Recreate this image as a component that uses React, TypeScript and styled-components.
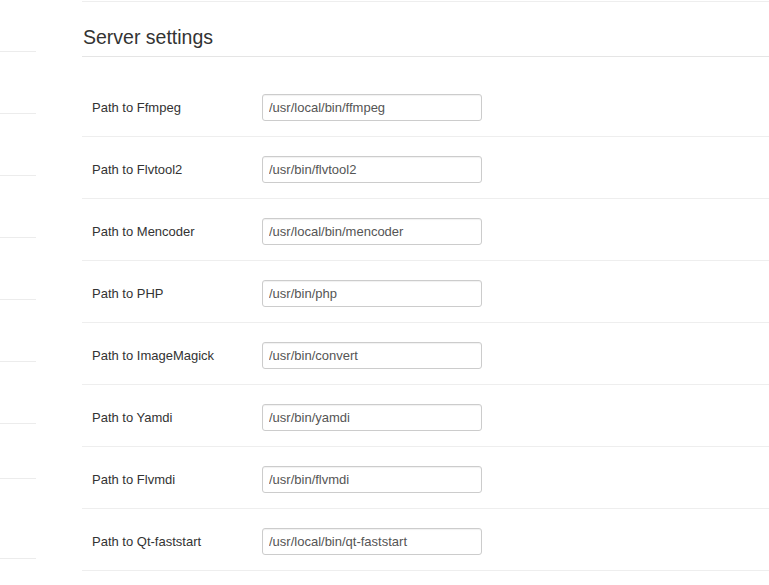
import React from "react";
import styled, { createGlobalStyle } from "styled-components";

const GlobalStyle = createGlobalStyle`
  html, body {
    margin: 0;
    padding: 0;
    background: #ffffff;
    font-family: "Liberation Sans", Arial, Helvetica, sans-serif;
    font-size: 13px;
    color: #333333;
  }
  * { box-sizing: border-box; }
`;

const Page = styled.div`
  display: flex;
  align-items: flex-start;
  gap: 46px;
  width: 769px;
  height: 585px;
  overflow: hidden;
`;

const Sidebar = styled.nav`
  flex: 0 0 36px;
  display: flex;
  flex-direction: column;
`;

const SideItem = styled.div<{ $h: number }>`
  height: ${(p) => p.$h + 1}px;
  border-bottom: 1px solid #ececec;
`;

const Main = styled.main`
  flex: 1;
  min-width: 0;
  margin-top: 1px;
  border-top: 1px solid #eeeeee;
`;

const Legend = styled.h2`
  margin: 14px 0 18px;
  padding: 2px 0 0 1px;
  font-size: 19.5px;
  font-weight: normal;
  line-height: 38px;
  color: #333333;
  border-bottom: 1px solid #e5e5e5;
`;

const Row = styled.div`
  display: flex;
  align-items: center;
  padding: 19px 10px 15px;
  border-bottom: 1px solid #eeeeee;
`;

const Label = styled.label`
  flex: 0 0 170px;
  font-size: 13px;
  color: #333333;
`;

const PathInput = styled.input`
  width: 220px;
  height: 27px;
  padding: 0 6px;
  border: 1px solid #cccccc;
  border-radius: 3px;
  box-shadow: inset 0 1px 1px rgba(0, 0, 0, 0.06);
  font-family: "Liberation Sans", Arial, Helvetica, sans-serif;
  font-size: 13px;
  color: #555555;
  background: #ffffff;
  outline: none;
`;

const sideHeights = [51, 61, 61, 61, 61, 61, 61, 54, 79];

const settings = [
  { label: "Path to Ffmpeg", value: "/usr/local/bin/ffmpeg" },
  { label: "Path to Flvtool2", value: "/usr/bin/flvtool2" },
  { label: "Path to Mencoder", value: "/usr/local/bin/mencoder" },
  { label: "Path to PHP", value: "/usr/bin/php" },
  { label: "Path to ImageMagick", value: "/usr/bin/convert" },
  { label: "Path to Yamdi", value: "/usr/bin/yamdi" },
  { label: "Path to Flvmdi", value: "/usr/bin/flvmdi" },
  { label: "Path to Qt-faststart", value: "/usr/local/bin/qt-faststart" },
];

export default function App() {
  return (
    <>
      <GlobalStyle />
      <Page>
        <Sidebar>
          {sideHeights.map((h, i) => (
            <SideItem key={i} $h={h} />
          ))}
        </Sidebar>
        <Main>
          <Legend>Server settings</Legend>
          {settings.map((s) => (
            <Row key={s.label}>
              <Label>{s.label}</Label>
              <PathInput type="text" defaultValue={s.value} readOnly />
            </Row>
          ))}
        </Main>
      </Page>
    </>
  );
}
